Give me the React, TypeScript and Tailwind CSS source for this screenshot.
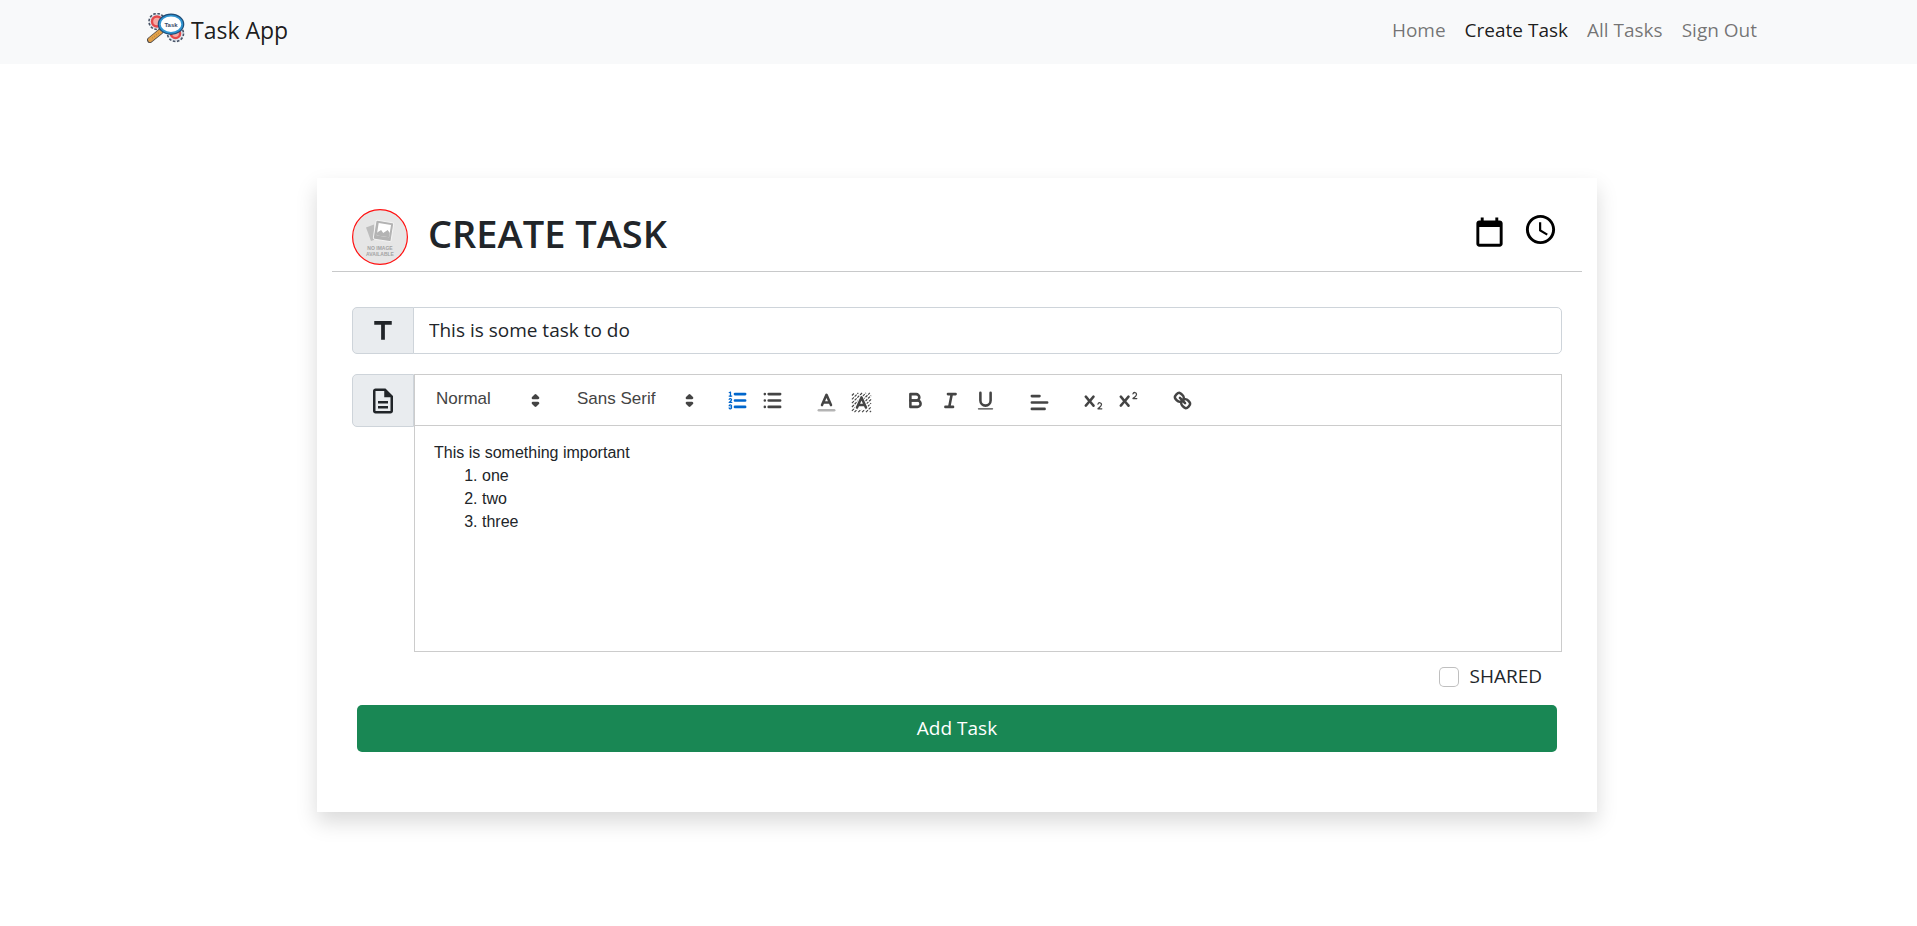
import { useState } from "react";
import type { ReactNode } from "react";

const X_PATH =
  "M9.65,5.241a1,1,0,0,0-1.409.108L6,7.964,3.759,5.349A1,1,0,0,0,2.192,6.59178Q2.21541,6.6213,2.241,6.649L4.684,9.5,2.241,12.35A1,1,0,0,0,3.71,13.70722q0.02557-.02768.049-0.05722L6,11.036,8.241,13.65a1,1,0,1,0,1.567-1.24277Q9.78459,12.3777,9.759,12.35L7.316,9.5,9.759,6.651A1,1,0,0,0,9.65,5.241Z";
const TWO_PATH =
  "M15.5,15H13.861a3.858,3.858,0,0,0,1.914-2.975,1.8,1.8,0,0,0-1.6-1.751A1.921,1.921,0,0,0,12.021,11.7a0.50013,0.50013,0,1,0,.957.291h0a0.914,0.914,0,0,1,1.053-.725,0.81,0.81,0,0,1,.744.762c0,1.076-1.16971,1.86982-1.93971,2.43082A1.45639,1.45639,0,0,0,12,15.5a0.5,0.5,0,0,0,.5.5h3A0.5,0.5,0,0,0,15.5,15Z";

function Glyph({ children }: { children: ReactNode }) {
  return (
    <svg
      viewBox="0 0 18 18"
      className="size-[23px] shrink-0"
      fill="none"
      stroke="currentColor"
      strokeWidth="2"
      strokeLinecap="round"
      strokeLinejoin="round"
      aria-hidden="true"
    >
      {children}
    </svg>
  );
}

function Tool({
  label,
  active = false,
  picker = false,
  children,
}: {
  label: string;
  active?: boolean;
  picker?: boolean;
  children: ReactNode;
}) {
  return (
    <button
      type="button"
      aria-label={label}
      className={`flex h-[30px] w-[35px] items-center justify-center hover:text-[#0066cc] ${
        active ? "text-[#0066cc]" : "text-[#444]"
      } ${picker ? "pt-1" : ""}`}
    >
      <Glyph>{children}</Glyph>
    </button>
  );
}

function Picker({ label, options, width }: { label: string; options: string[]; width: string }) {
  return (
    <div className={`relative flex h-[30px] items-center text-[#444] ${width}`}>
      <select
        aria-label={label}
        className="h-7 w-full appearance-none bg-transparent pb-1 pl-[11px] font-['Liberation_Sans',sans-serif] text-[17px] outline-none"
      >
        {options.map((o) => (
          <option key={o}>{o}</option>
        ))}
      </select>
      <span className="pointer-events-none absolute right-0">
        <Glyph>
          <polygon points="7 11 9 13 11 11 7 11" />
          <polygon points="7 7 9 5 11 7 7 7" />
        </Glyph>
      </span>
    </div>
  );
}

function Toolbar() {
  return (
    <div className="flex flex-wrap gap-x-[19px] border border-[#ccc] p-[10px]">
      <Picker label="Heading" options={["Normal", "Heading 1", "Heading 2"]} width="w-[122px]" />
      <Picker label="Font" options={["Sans Serif", "Serif", "Monospace"]} width="w-[135px]" />
      <div className="flex">
        <Tool label="Ordered list" active>
          <path d="M7,4H15M7,9H15M7,14H15" />
          <path strokeWidth="1" d="M2.5,5.5H4.5" />
          <path
            fill="currentColor"
            stroke="none"
            d="M3.5,6A0.5,0.5,0,0,1,3,5.5V3.085l-0.276.138A0.5,0.5,0,0,1,2.053,3c-0.124-.247-0.023-0.324.224-0.447l1-.5A0.5,0.5,0,0,1,4,2.5v3A0.5,0.5,0,0,1,3.5,6Z"
          />
          <path strokeWidth="1" d="M4.5,10.5h-2c0-.234,1.85-1.076,1.85-2.234A0.959,0.959,0,0,0,2.5,8.156" />
          <path
            strokeWidth="1"
            d="M2.5,14.846a0.959,0.959,0,0,0,1.85-.109A0.7,0.7,0,0,0,3.75,14a0.688,0.688,0,0,0,.6-0.736,0.959,0.959,0,0,0-1.85-.109"
          />
        </Tool>
        <Tool label="Bullet list">
          <path d="M6,4H15M6,9H15M6,14H15M3,4H3M3,9H3M3,14H3" />
        </Tool>
      </div>
      <div className="flex">
        <Tool label="Text color" picker>
          <path opacity="0.4" d="M3,15H15" />
          <path d="M5.5,11L9,3L12.5,11M11.63,9H6.38" />
        </Tool>
        <Tool label="Background color" picker>
          <path
            strokeWidth="0.9"
            d="M1.5,3.5L3.5,1.5M1.5,6.5L6.5,1.5M1.5,9.5L9.5,1.5M1.5,12.5L12.5,1.5M1.5,15.5L15.5,1.5M3.5,16.5L16.5,3.5M6.5,16.5L16.5,6.5M9.5,16.5L16.5,9.5M12.5,16.5L16.5,12.5M15.5,16.5L16.5,15.5"
            strokeDasharray="2.2 0.8"
            strokeLinecap="butt"
          />
          <path stroke="#fff" strokeWidth="3.4" fill="#fff" d="M5.5,13L9,5L12.5,13Z" />
          <path d="M5.5,13L9,5L12.5,13M11.63,11H6.38" />
        </Tool>
      </div>
      <div className="flex">
        <Tool label="Bold">
          <path d="M5,4H9.5A2.5,2.5,0,0,1,12,6.5v0A2.5,2.5,0,0,1,9.5,9H5V4Z" />
          <path d="M5,9h5.5A2.5,2.5,0,0,1,13,11.5v0A2.5,2.5,0,0,1,10.5,14H5V9Z" />
        </Tool>
        <Tool label="Italic">
          <path d="M7,4H13M5,14H11M8,14L10,4" />
        </Tool>
        <Tool label="Underline">
          <path d="M5,3V9a4.012,4.012,0,0,0,4,4H9a4.012,4.012,0,0,0,4-4V3" />
          <rect fill="currentColor" stroke="none" x="3" y="15" width="12" height="1" rx="0.5" />
        </Tool>
      </div>
      <Tool label="Align" picker>
        <path d="M3,9H15M3,14H13M3,4H9" />
      </Tool>
      <div className="flex">
        <Tool label="Subscript">
          <path fill="currentColor" stroke="none" d={TWO_PATH} />
          <path fill="currentColor" stroke="none" d={X_PATH} />
        </Tool>
        <Tool label="Superscript">
          <path fill="currentColor" stroke="none" transform="translate(0 -8)" d={TWO_PATH} />
          <path fill="currentColor" stroke="none" d={X_PATH} />
        </Tool>
      </div>
      <Tool label="Link">
        <path d="M7,7L11,11" />
        <path d="M8.9,4.577a3.476,3.476,0,0,1,.36,4.679A3.476,3.476,0,0,1,4.577,8.9C3.185,7.5,2.035,6.4,4.217,4.217S7.5,3.185,8.9,4.577Z" />
        <path d="M13.423,9.1a3.476,3.476,0,0,0-4.679-.36,3.476,3.476,0,0,0,.36,4.679c1.392,1.392,2.5,2.542,4.679.36S14.815,10.5,13.423,9.1Z" />
      </Tool>
    </div>
  );
}

function Logo() {
  return (
    <svg viewBox="0 0 38 30" className="h-[30px] w-[38px]" aria-hidden="true">
      <circle cx="10" cy="8.5" r="8" fill="#dfe5ec" stroke="#4a5568" strokeWidth="1.6" strokeDasharray="2.6 1.6" />
      <circle cx="10" cy="8.5" r="5" fill="#f4a9a4" stroke="#e5484a" strokeWidth="2.4" />
      <circle cx="28.5" cy="20.5" r="8" fill="#dfe5ec" stroke="#4a5568" strokeWidth="1.6" strokeDasharray="2.6 1.6" />
      <circle cx="28.5" cy="20.5" r="4.6" fill="#f4a9a4" stroke="#e5484a" strokeWidth="2.4" />
      <path d="M13.5 18.5L3 27" stroke="#4d4a4a" strokeWidth="6" strokeLinecap="round" />
      <path d="M13.5 18.5L3.2 26.8" stroke="#e0a04a" strokeWidth="4.4" strokeLinecap="round" />
      <path d="M12 19.8L4 26" stroke="#a86f28" strokeWidth="0.8" strokeDasharray="1 1.6" />
      <ellipse cx="24" cy="11.2" rx="12" ry="9.4" fill="#fff" stroke="#1f4e79" strokeWidth="2.6" />
      <ellipse cx="24" cy="11.2" rx="11.2" ry="8.6" fill="#fff" stroke="#2f94d0" strokeWidth="1.8" />
      <text
        x="24"
        y="13.6"
        textAnchor="middle"
        className="fill-[#3b4a66] font-['Liberation_Sans',sans-serif] text-[6px] font-bold"
      >
        Task
      </text>
    </svg>
  );
}

function Avatar() {
  return (
    <svg viewBox="0 0 56 56" className="size-14 shrink-0" role="img" aria-label="No image available">
      <circle cx="28" cy="28" r="27.4" fill="#e6e6e6" stroke="#f11" strokeWidth="1.2" />
      <path d="M14 18.5L22 15.5L22 31L19 32Z" fill="#bdbdbd" />
      <g transform="rotate(9 32 22)">
        <rect x="22.5" y="12.5" width="18" height="19" rx="1.5" fill="#b3b3b3" stroke="#f4f4f4" strokeWidth="1" />
        <rect x="25.5" y="15" width="12.5" height="12.5" fill="#fff" />
        <path d="M25.5 27.5V24.5L29 21.5L31.5 24L35.5 20.5L38 23V27.5Z" fill="#b3b3b3" />
      </g>
      <g
        textAnchor="middle"
        className="fill-[#a3a3a3] font-['Liberation_Sans',sans-serif] text-[5px] font-bold"
      >
        <text x="28" y="41">NO IMAGE</text>
        <text x="28" y="47">AVAILABLE</text>
      </g>
    </svg>
  );
}

const LINKS = ["Home", "Create Task", "All Tasks", "Sign Out"];

export default function App() {
  const [title, setTitle] = useState("This is some task to do");
  const [shared, setShared] = useState(false);

  return (
    <div className="min-h-screen bg-white font-['Open_Sans',sans-serif] text-[19px] text-[#212529]">
      <header className="bg-[#f8f9fa] pr-[3px]">
        <nav className="mx-auto flex h-16 max-w-[1650px] items-center justify-between px-[15px] pb-1">
          <a href="#" className="flex items-center text-[23px] text-black/90">
            <span className="-mt-1 pr-1.5">
              <Logo />
            </span>
            Task App
          </a>
          <ul className="flex gap-[19px] pr-2.5">
            {LINKS.map((name) => (
              <li key={name}>
                <a href="#" className={name === "Create Task" ? "text-black/90" : "text-black/55"}>
                  {name}
                </a>
              </li>
            ))}
          </ul>
        </nav>
      </header>

      <main className="pt-[114px] pr-[3px]">
        <form
          onSubmit={(e) => e.preventDefault()}
          className="mx-auto max-w-[1280px] bg-white px-[15px] pb-[60px] shadow-[0_10px_20px_rgba(0,0,0,0.15)]"
        >
          <div className="flex items-center border-b border-[#c8c9ca] px-5 pt-[31px] pb-1.5">
            <Avatar />
            <h1 className="pb-2 pl-5 text-[38px] leading-[48px] font-semibold">CREATE TASK</h1>
            <div className="ml-auto flex gap-4 pr-1 pb-3 text-black">
              <button type="button" aria-label="Pick a date" className="pt-1">
                <svg viewBox="0 0 24 24" className="size-[35px]" fill="currentColor">
                  <path d="M19 3h-1V1h-2v2H8V1H6v2H5c-1.11 0-1.99.9-1.99 2L3 19c0 1.1.89 2 2 2h14c1.1 0 2-.9 2-2V5c0-1.100-.9-2-2-2zm0 16H5V7.500h14V19z" />
                </svg>
              </button>
              <button type="button" aria-label="Pick a time" className="pb-1">
                <svg viewBox="0 0 24 24" className="size-[35px]" fill="currentColor">
                  <path d="M11.99 2C6.47 2 2 6.480 2 12s4.470 10 9.990 10C17.520 22 22 17.520 22 12S17.520 2 11.990 2zM12 20c-4.420 0-8-3.580-8-8s3.580-8 8-8 8 3.580 8 8-3.580 8-8 8z" />
                  <path d="M12.5 7H11v6l5.250 3.150.75-1.230-4.500-2.670z" />
                </svg>
              </button>
            </div>
          </div>

          <div className="px-5 pt-[35px]">
            <div className="flex h-[47px]">
              <label
                htmlFor="title"
                aria-label="Title"
                className="flex w-[62px] items-center justify-center rounded-l-[5px] border border-[#ced4da] bg-[#e9ecef]"
              >
                <svg viewBox="0 0 24 24" className="size-[30px]" fill="currentColor">
                  <path d="M5 4v3h5.500v12h3V7H19V4z" />
                </svg>
              </label>
              <input
                id="title"
                type="text"
                value={title}
                onChange={(e) => setTitle(e.target.value)}
                className="-ml-px min-w-0 flex-1 rounded-r-[5px] border border-[#ced4da] bg-white px-[15px] outline-none"
              />
            </div>

            <div className="mt-5 flex items-start">
              <span className="flex h-[53px] w-[62px] items-center justify-center rounded-l-[5px] border border-[#ced4da] bg-[#e9ecef]">
                <svg viewBox="0 0 24 24" className="size-[30px]" fill="currentColor" aria-hidden="true">
                  <path d="M8 16h8v2H8zm0-4h8v2H8zm6-10H6c-1.100 0-2 .9-2 2v16c0 1.100.89 2 1.990 2H18c1.100 0 2-.9 2-2V8l-6-6zm4 18H6V4h7v5h5v11z" />
                </svg>
              </span>
              <div className="min-w-0 flex-1">
                <Toolbar />
                <div
                  contentEditable
                  suppressContentEditableWarning
                  role="textbox"
                  aria-multiline="true"
                  aria-label="Description"
                  className="min-h-[226px] border border-t-0 border-[#ccc] px-[19px] py-[15px] font-['Liberation_Sans',sans-serif] text-base leading-[23px] outline-none"
                >
                  <p>This is something important</p>
                  <ol className="list-decimal pl-12">
                    <li>one</li>
                    <li>two</li>
                    <li>three</li>
                  </ol>
                </div>
              </div>
            </div>

            <div className="flex h-[53px] items-center justify-end pr-5 pb-1">
              <label className="flex items-center gap-2.5">
                <input
                  type="checkbox"
                  checked={shared}
                  onChange={(e) => setShared(e.target.checked)}
                  className="size-5 appearance-none rounded-[5px] border border-black/25 bg-white checked:bg-[#0d6efd]"
                />
                SHARED
              </label>
            </div>

            <div className="px-[5px]">
              <button type="submit" className="h-[47px] w-full rounded-[5px] bg-[#198754] text-white">
                Add Task
              </button>
            </div>
          </div>
        </form>
      </main>
    </div>
  );
}
